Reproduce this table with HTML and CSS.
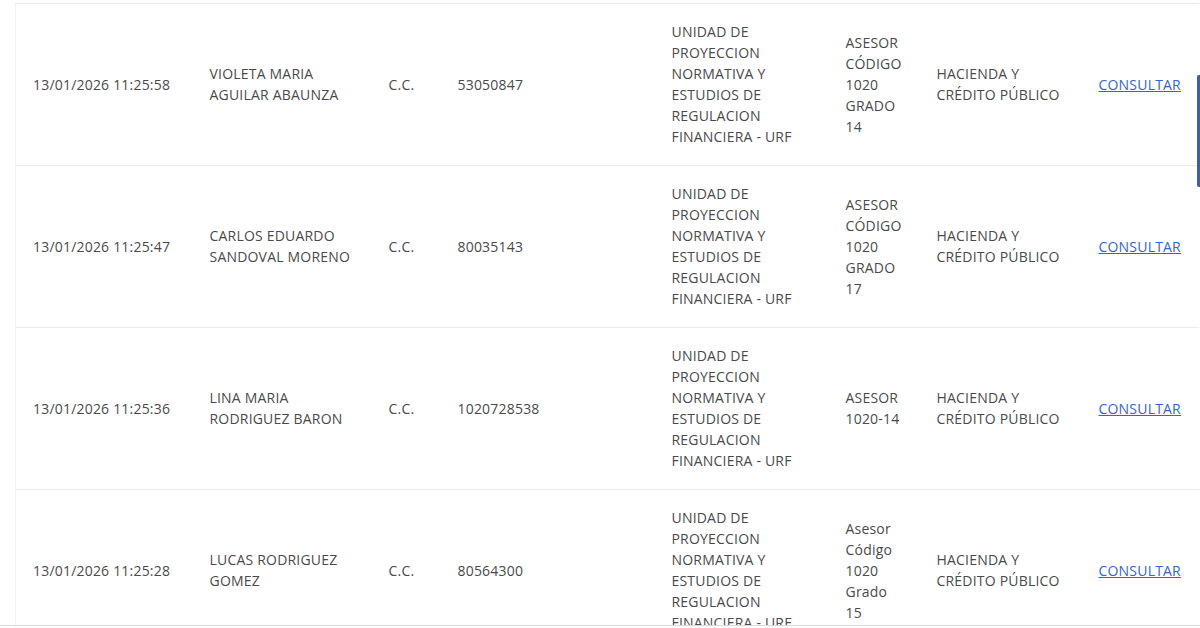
FILE: index.html
```html
<!DOCTYPE html>
<html lang="es">
<head>
<meta charset="utf-8">
<title>Consulta</title>
<link rel="stylesheet" href="styles.css">
</head>
<body>
<div class="page">
  <table class="grid">
    <colgroup>
      <col class="c-date"><col class="c-name"><col class="c-type"><col class="c-num"><col class="c-unit"><col class="c-cargo"><col class="c-ent"><col class="c-act">
    </colgroup>
    <tbody>
      <tr>
        <td>13/01/2026 11:25:58</td>
        <td>VIOLETA MARIA AGUILAR ABAUNZA</td>
        <td>C.C.</td>
        <td>53050847</td>
        <td>UNIDAD DE PROYECCION NORMATIVA Y ESTUDIOS DE REGULACION FINANCIERA - URF</td>
        <td class="cargo">ASESOR CÓDIGO 1020 GRADO 14</td>
        <td>HACIENDA Y CRÉDITO PÚBLICO</td>
        <td class="act"><a href="#" class="link">CONSULTAR</a></td>
      </tr>
      <tr>
        <td>13/01/2026 11:25:47</td>
        <td>CARLOS EDUARDO SANDOVAL MORENO</td>
        <td>C.C.</td>
        <td>80035143</td>
        <td>UNIDAD DE PROYECCION NORMATIVA Y ESTUDIOS DE REGULACION FINANCIERA - URF</td>
        <td class="cargo">ASESOR CÓDIGO 1020 GRADO 17</td>
        <td>HACIENDA Y CRÉDITO PÚBLICO</td>
        <td class="act"><a href="#" class="link">CONSULTAR</a></td>
      </tr>
      <tr>
        <td>13/01/2026 11:25:36</td>
        <td>LINA MARIA RODRIGUEZ BARON</td>
        <td>C.C.</td>
        <td>1020728538</td>
        <td>UNIDAD DE PROYECCION NORMATIVA Y ESTUDIOS DE REGULACION FINANCIERA - URF</td>
        <td class="cargo">ASESOR 1020-14</td>
        <td>HACIENDA Y CRÉDITO PÚBLICO</td>
        <td class="act"><a href="#" class="link">CONSULTAR</a></td>
      </tr>
      <tr>
        <td>13/01/2026 11:25:28</td>
        <td>LUCAS RODRIGUEZ GOMEZ</td>
        <td>C.C.</td>
        <td>80564300</td>
        <td>UNIDAD DE PROYECCION NORMATIVA Y ESTUDIOS DE REGULACION FINANCIERA - URF</td>
        <td class="cargo">Asesor Código 1020 Grado 15</td>
        <td>HACIENDA Y CRÉDITO PÚBLICO</td>
        <td class="act"><a href="#" class="link">CONSULTAR</a></td>
      </tr>
    </tbody>
  </table>
  <div class="thumb"></div>
</div>
</body>
</html>
```

FILE: styles.css
```css
html, body {
  margin: 0;
  padding: 0;
  background: #ffffff;
}
body {
  font-family: "Open Sans", "Liberation Sans", sans-serif;
  font-size: 14px;
  color: #4a4a4a;
  height: 628px;
  overflow: hidden;
}
.page {
  position: relative;
  height: 626px;
  padding: 3px 0 0 15px;
  box-sizing: border-box;
  border-bottom: 1px solid #d9d9d9;
  overflow: hidden;
}
.grid {
  width: 1183px;
  border-collapse: collapse;
  table-layout: fixed;
  border-left: 1px solid #eef1f6;
}
.c-date { width: 177px; }
.c-name { width: 179px; }
.c-type { width: 69px; }
.c-num { width: 214px; }
.c-unit { width: 174px; }
.c-cargo { width: 91px; }
.c-ent { width: 162px; }
.c-act { width: 117px; }
.grid td {
  border-top: 1px solid #e6ecf6;
  padding: 17px 18px 18px 17px;
  line-height: 21px;
  vertical-align: middle;
  letter-spacing: 0.2px;
  word-wrap: break-word;
}
.grid td.cargo {
  padding-right: 16px;
}
.grid td.act {
  padding-right: 2px;
  white-space: nowrap;
}
.link {
  color: #3366cc;
  text-decoration: underline;
}
.thumb {
  position: absolute;
  right: 0;
  top: 75px;
  width: 3px;
  height: 112px;
  background: #3e5f9e;
  border-radius: 2px 0 0 2px;
}
```
